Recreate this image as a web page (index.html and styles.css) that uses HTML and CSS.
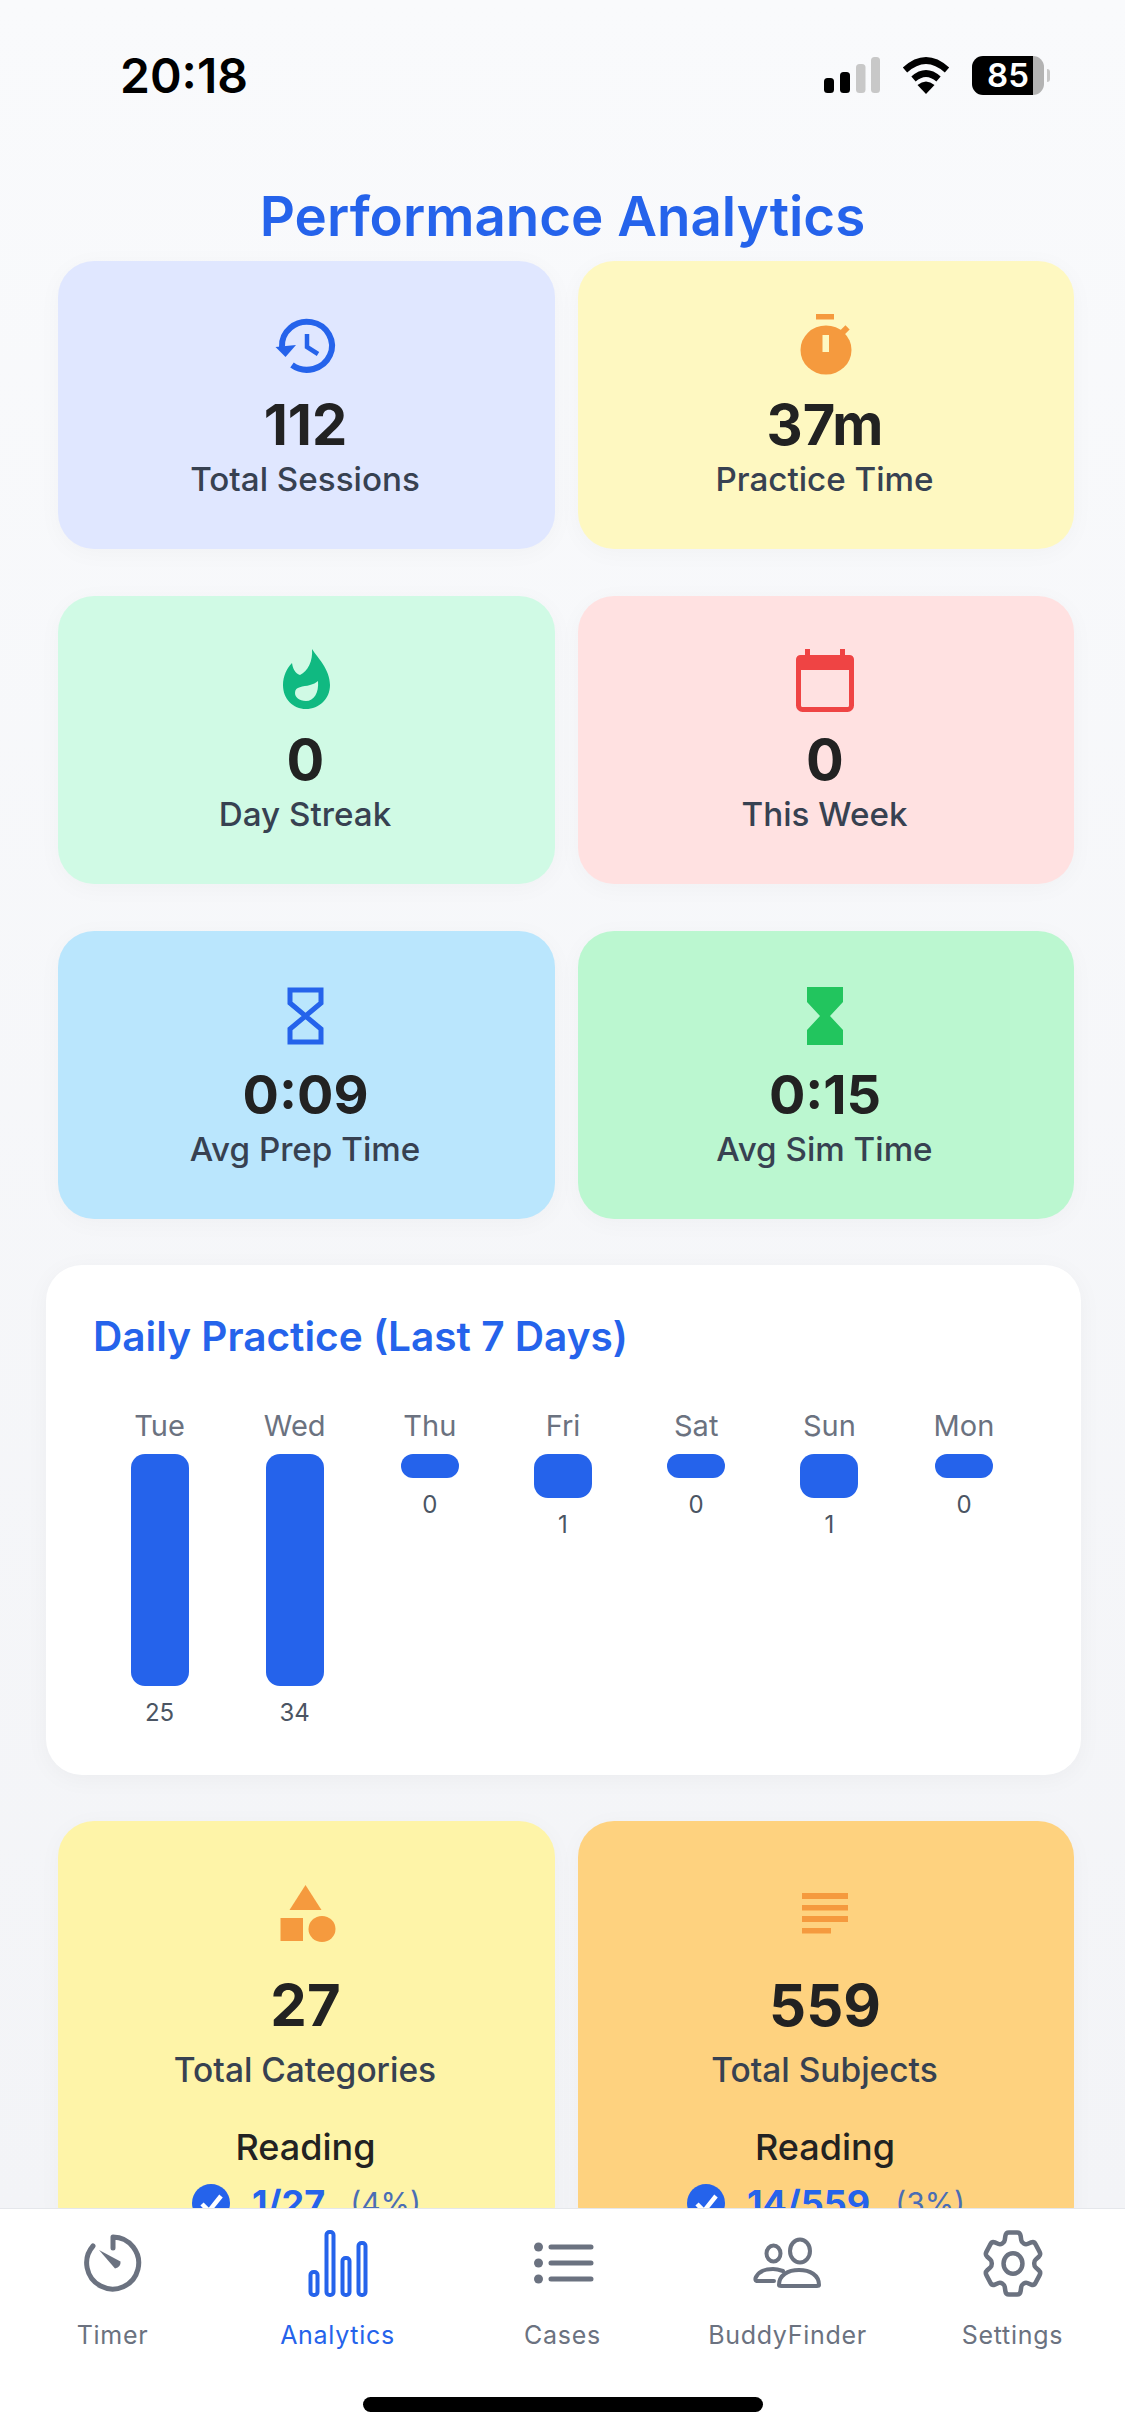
FILE: index.html
```html
<!DOCTYPE html>
<html lang="en">
<head>
    <meta charset="UTF-8">
    <meta name="viewport" content="width=device-width, initial-scale=1.0">
    <title>Performance Analytics</title>
    <link rel="stylesheet" href="styles.css">
</head>
<body>

<div class="app">
    <div class="content">
        <div class="status-bar">
            <span class="time">20:18</span>
            <div class="status-icons">
                <svg class="signal" width="56" height="36" viewBox="0 0 56 36">
                    <rect x="0" y="21" width="10" height="15" rx="3.5" fill="#000"/>
                    <rect x="16" y="15" width="10" height="21" rx="3.5" fill="#000"/>
                    <rect x="32" y="7" width="9.500" height="29" rx="3.5" fill="#c8c8c8"/>
                    <rect x="47" y="0" width="9" height="36" rx="3.5" fill="#c8c8c8"/>
                </svg>
                <svg class="wifi" width="48" height="37" viewBox="0 0 48 37">
                    <path d="M3 13Q24 -6 45 13" fill="none" stroke="#000" stroke-width="6.5"/>
                    <path d="M11.500 22Q24 11 36.500 22" fill="none" stroke="#000" stroke-width="6.5"/>
                    <path d="M15.500 28Q24 21 32.500 28L24 37Z" fill="#000"/>
                </svg>
                <span class="battery">85</span>
            </div>
        </div>

        <h1 class="page-title">Performance Analytics</h1>

        <div class="stat-grid">
            <div class="stat-card indigo">
                <div class="stat-icon">
                    <svg width="80" height="64" viewBox="0 0 80 64">
                        <path d="M15 33A25 24 0 1 1 25 51" fill="none" stroke="#2563eb" stroke-width="6"/>
                        <path d="M8.500 33L29 31L18.500 43Z" fill="#2563eb"/>
                        <path d="M40 20V33L51 40" fill="none" stroke="#2563eb" stroke-width="4.500"/>
                    </svg>
                </div>
                <div class="stat-value">112</div>
                <div class="stat-label">Total Sessions</div>
            </div>
            <div class="stat-card yellow">
                <div class="stat-icon">
                    <svg width="80" height="64" viewBox="0 0 80 64">
                        <rect x="30" y="0" width="18" height="5.500" fill="#f59a3e"/>
                        <rect x="55" y="12" width="6" height="11" transform="rotate(45 58 17)" fill="#f59a3e"/>
                        <ellipse cx="40" cy="36" rx="25.500" ry="24.500" fill="#f59a3e"/>
                        <rect x="36.500" y="21" width="6.500" height="17" fill="#fef8c1"/>
                    </svg>
                </div>
                <div class="stat-value">37m</div>
                <div class="stat-label">Practice Time</div>
            </div>
            <div class="stat-card mint">
                <div class="stat-icon">
                    <svg width="80" height="64" viewBox="0 0 80 64">
                        <path transform="translate(14 0)" fill-rule="evenodd" fill="#10b981" d="M31 0C36 8 49 20 49 36C49 50 38 60 25 60C12 60 2 50 2 36C2 27 6 19 11 14C12 20 14 24 19 26C27 22 32 12 31 0ZM37 32C38 44 33 52 25 52C18 52 14 48 14 44C14 37 22 38 29 36C32 35 35 34 37 32Z"/>
                    </svg>
                </div>
                <div class="stat-value">0</div>
                <div class="stat-label">Day Streak</div>
            </div>
            <div class="stat-card rose">
                <div class="stat-icon">
                    <svg width="80" height="64" viewBox="0 0 80 64">
                        <rect x="19" y="0" width="5" height="9" fill="#ef4444"/>
                        <rect x="54" y="0" width="5" height="9" fill="#ef4444"/>
                        <rect x="12.500" y="8.500" width="53" height="52" rx="4" fill="none" stroke="#ef4444" stroke-width="5"/>
                        <path d="M10 21V11Q10 6 15 6H63Q68 6 68 11V21Z" fill="#ef4444"/>
                    </svg>
                </div>
                <div class="stat-value">0</div>
                <div class="stat-label">This Week</div>
            </div>
            <div class="stat-card sky">
                <div class="stat-icon">
                    <svg width="80" height="64" viewBox="0 0 80 64">
                        <path d="M23 6H54V19L23 45V58H54V45L23 19Z" fill="none" stroke="#2563eb" stroke-width="5"/>
                    </svg>
                </div>
                <div class="stat-value narrow">0:09</div>
                <div class="stat-label">Avg Prep Time</div>
            </div>
            <div class="stat-card green">
                <div class="stat-icon">
                    <svg width="80" height="64" viewBox="0 0 80 64">
                        <path d="M21 3H57V18L44 32L57 46V61H21V46L34 32L21 18Z" fill="#22c55e"/>
                    </svg>
                </div>
                <div class="stat-value narrow">0:15</div>
                <div class="stat-label">Avg Sim Time</div>
            </div>
        </div>

        <div class="chart-card">
            <h2 class="chart-title">Daily Practice (Last 7 Days)</h2>
            <div class="chart">
                <div class="day"><span class="day-name">Tue</span><div class="bar tall"></div><span class="day-count">25</span></div>
                <div class="day"><span class="day-name">Wed</span><div class="bar tall"></div><span class="day-count">34</span></div>
                <div class="day"><span class="day-name">Thu</span><div class="bar none"></div><span class="day-count">0</span></div>
                <div class="day"><span class="day-name">Fri</span><div class="bar one"></div><span class="day-count">1</span></div>
                <div class="day"><span class="day-name">Sat</span><div class="bar none"></div><span class="day-count">0</span></div>
                <div class="day"><span class="day-name">Sun</span><div class="bar one"></div><span class="day-count">1</span></div>
                <div class="day"><span class="day-name">Mon</span><div class="bar none"></div><span class="day-count">0</span></div>
            </div>
        </div>

        <div class="stat-grid">
            <div class="stat-card tall-card lemon">
                <div class="stat-icon">
                    <svg width="80" height="64" viewBox="0 0 80 64">
                        <path d="M38.500 4L54.500 29H22.500Z" fill="#f59a3e"/>
                        <rect x="13.500" y="37" width="22.500" height="23" fill="#f59a3e"/>
                        <ellipse cx="55" cy="48" rx="13.500" ry="13" fill="#f59a3e"/>
                    </svg>
                </div>
                <div class="stat-value">27</div>
                <div class="stat-label">Total Categories</div>
                <div class="progress-title">Reading</div>
                <div class="progress-row">
                    <svg width="38" height="38" viewBox="0 0 38 38">
                        <circle cx="19" cy="19" r="19" fill="#2563eb"/>
                        <path d="M10 20L17 27L29 12" fill="none" stroke="#fff" stroke-width="4.500"/>
                    </svg>
                    <span class="progress-count">1/27</span>
                    <span class="progress-percent">(4%)</span>
                </div>
            </div>
            <div class="stat-card tall-card amber">
                <div class="stat-icon">
                    <svg width="80" height="64" viewBox="0 0 80 64">
                        <rect x="16" y="12" width="46" height="6" fill="#f59a3e"/>
                        <rect x="16" y="24" width="46" height="5.500" fill="#f59a3e"/>
                        <rect x="16" y="35" width="46" height="6" fill="#f59a3e"/>
                        <rect x="16" y="47" width="29" height="5.500" fill="#f59a3e"/>
                    </svg>
                </div>
                <div class="stat-value">559</div>
                <div class="stat-label">Total Subjects</div>
                <div class="progress-title">Reading</div>
                <div class="progress-row">
                    <svg width="38" height="38" viewBox="0 0 38 38">
                        <circle cx="19" cy="19" r="19" fill="#2563eb"/>
                        <path d="M10 20L17 27L29 12" fill="none" stroke="#fff" stroke-width="4.500"/>
                    </svg>
                    <span class="progress-count">14/559</span>
                    <span class="progress-percent">(3%)</span>
                </div>
            </div>
        </div>
    </div>

    <div class="tab-bar">
        <div class="tabs">
            <div class="tab">
                <svg width="80" height="72" viewBox="0 0 80 72">
                    <path d="M40 19V8A26 26 0 1 1 20 17" fill="none" stroke="#6b7280" stroke-width="5" stroke-linecap="round" stroke-linejoin="round"/>
                    <path d="M26 21L47.500 32.500Q48 38 42 39.500Z" fill="#6b7280"/>
                </svg>
                <span class="tab-label">Timer</span>
            </div>
            <div class="tab active">
                <svg width="80" height="72" viewBox="0 0 80 72" fill="none" stroke="#2563eb" stroke-width="4">
                    <rect x="12.500" y="43" width="7" height="23" rx="3"/>
                    <rect x="28.500" y="3" width="7" height="63" rx="3"/>
                    <rect x="44.500" y="29" width="7" height="37" rx="3"/>
                    <rect x="60.500" y="14" width="7" height="52" rx="3"/>
                </svg>
                <span class="tab-label">Analytics</span>
            </div>
            <div class="tab">
                <svg width="80" height="72" viewBox="0 0 80 72">
                    <circle cx="15.500" cy="18" r="4.500" fill="#6b7280"/>
                    <circle cx="15.500" cy="34" r="4.500" fill="#6b7280"/>
                    <circle cx="15.500" cy="50" r="4.500" fill="#6b7280"/>
                    <path d="M28 18H68M28 34H68M28 50H68" stroke="#6b7280" stroke-width="5" stroke-linecap="round"/>
                </svg>
                <span class="tab-label">Cases</span>
            </div>
            <div class="tab">
                <svg width="80" height="72" viewBox="0 0 80 72" fill="none" stroke="#6b7280" stroke-width="4">
                    <ellipse cx="25.500" cy="24.500" rx="7" ry="8"/>
                    <ellipse cx="52" cy="22" rx="10" ry="11.500"/>
                    <path d="M31 56C31 46 40 41 51 41C62 41 71 46 71 56Q71 57 69 57H33Q31 57 31 56Z"/>
                    <path d="M26 52H10C7 52 7 50 8 48C11 42 18 40 25 40C29 40 32 41 35 42" stroke-linecap="round"/>
                </svg>
                <span class="tab-label">BuddyFinder</span>
            </div>
            <div class="tab">
                <svg width="80" height="72" viewBox="0 0 80 72" fill="none" stroke="#6b7280" stroke-width="4.500">
                    <g transform="translate(40 34.500) scale(3.150 3.450) translate(-12 -12)">
                        <path vector-effect="non-scaling-stroke" d="M9.594 3.94c.09-.542.56-.94 1.11-.94h2.593c.55 0 1.02.398 1.11.94l.213 1.281c.063.374.313.686.645.87.074.04.147.083.22.127.325.196.72.257 1.075.124l1.217-.456a1.125 1.125 0 0 1 1.37.49l1.296 2.247a1.125 1.125 0 0 1-.26 1.431l-1.003.827c-.293.241-.438.613-.43.992a7.723 7.723 0 0 1 0 .255c-.008.378.137.75.43.991l1.004.827c.424.35.534.955.26 1.43l-1.298 2.247a1.125 1.125 0 0 1-1.369.491l-1.217-.456c-.355-.133-.75-.072-1.076.124a6.47 6.47 0 0 1-.22.128c-.331.183-.581.495-.644.869l-.213 1.281c-.09.543-.56.94-1.11.94h-2.594c-.55 0-1.019-.398-1.11-.94l-.213-1.281c-.062-.374-.312-.686-.644-.87a6.52 6.52 0 0 1-.22-.127c-.325-.196-.72-.257-1.076-.124l-1.217.456a1.125 1.125 0 0 1-1.369-.49l-1.297-2.247a1.125 1.125 0 0 1 .26-1.431l1.004-.827c.292-.24.437-.613.43-.991a6.932 6.932 0 0 1 0-.255c.007-.38-.138-.751-.43-.992l-1.004-.827a1.125 1.125 0 0 1-.26-1.43l1.297-2.247a1.125 1.125 0 0 1 1.37-.491l1.216.456c.356.133.751.072 1.076-.124.072-.044.146-.086.22-.128.332-.183.582-.495.644-.869l.214-1.28Z"/>
                        <circle vector-effect="non-scaling-stroke" cx="12" cy="12" r="3"/>
                    </g>
                </svg>
                <span class="tab-label">Settings</span>
            </div>
        </div>
        <div class="home-indicator"></div>
    </div>
</div>

</body>
</html>
```

FILE: styles.css
```css
body {
    margin: 0;
    font-family: Inter, "Liberation Sans", sans-serif;
    background: #f8f9fb;
    color: #222;
}
.app {
    display: flex;
    flex-direction: column;
    height: 2436px;
    overflow: hidden;
}
.content {
    flex: 1;
    min-height: 0;
    overflow: hidden;
    background: linear-gradient(to bottom, #f9fafc, #f3f4f7);
}
.status-bar {
    display: flex;
    justify-content: space-between;
    align-items: center;
    height: 150px;
    padding: 0 81px 0 120px;
}
.time {
    font-size: 48px;
    font-weight: 600;
    color: #000;
}
.status-icons {
    display: flex;
    align-items: center;
}
.wifi {
    margin-left: 22px;
}
.battery {
    position: relative;
    width: 72px;
    height: 39px;
    margin-left: 22px;
    border-radius: 11px;
    background: linear-gradient(to right, #000 85%, #b3b3b3 85%);
    color: #fff;
    font-size: 33px;
    font-weight: 600;
    line-height: 39px;
    text-align: center;
}
.battery::after {
    content: "";
    position: absolute;
    right: -6px;
    top: 13px;
    width: 3px;
    height: 13px;
    border-radius: 0 4px 4px 0;
    background: #c8c8c8;
}
.page-title {
    margin: 31px 0 10px;
    color: #2563eb;
    font-size: 54.7px;
    font-weight: 600;
    line-height: 70px;
    text-align: center;
}
.stat-grid {
    display: grid;
    grid-template-columns: 497px 496px;
    column-gap: 23px;
    row-gap: 47px;
    margin: 0 51px 0 58px;
}
.stat-card {
    box-sizing: border-box;
    height: 288px;
    padding-top: 53px;
    border-radius: 36px;
    text-align: center;
    box-shadow: 0 4px 24px rgba(0, 0, 0, 0.03);
}
.stat-icon {
    height: 64px;
}
.stat-icon svg {
    display: block;
    margin: 0 auto;
}
.stat-value {
    margin-top: 14px;
    padding-right: 2px;
    font-size: 56px;
    font-weight: 700;
    line-height: 66px;
}
.stat-value.narrow {
    font-size: 54px;
}
.stat-label {
    margin-top: -1px;
    padding-right: 3px;
    color: #374151;
    font-size: 33.2px;
    font-weight: 500;
    line-height: 44px;
}
.indigo { background: #e0e7ff; }
.yellow { background: #fef8c1; }
.mint { background: #d0fae5; }
.rose { background: #ffe1e1; }
.sky { background: #bae6fd; }
.green { background: #bbf7d0; }
.lemon { background: #fef4a8; }
.amber { background: #fed27f; }
.tall-card {
    height: 420px;
    padding-top: 60px;
}
.tall-card .stat-value {
    margin-top: 27px;
    font-size: 58px;
}
.tall-card .stat-label {
    margin-top: 10px;
    font-size: 33.5px;
}
.progress-title {
    margin-top: 33px;
    padding-right: 2px;
    font-size: 36px;
    font-weight: 500;
    line-height: 44px;
}
.progress-row {
    display: flex;
    justify-content: center;
    align-items: center;
    height: 38px;
    margin-top: 15px;
}
.progress-count {
    margin-left: 22px;
    color: #2563eb;
    font-size: 36px;
    font-weight: 700;
}
.progress-percent {
    margin-left: 25px;
    color: #4a6db5;
    font-size: 30px;
}
.chart-card {
    box-sizing: border-box;
    margin: 46px 44px 46px 46px;
    padding: 47px;
    border-radius: 36px;
    background: white;
    box-shadow: 0 4px 24px rgba(0, 0, 0, 0.04);
}
.chart-title {
    margin: 0 0 44px;
    color: #2563eb;
    font-size: 40.6px;
    font-weight: 600;
    line-height: 50px;
}
.chart {
    display: flex;
    justify-content: space-around;
    height: 322px;
    padding-right: 2px;
}
.day {
    display: flex;
    flex-direction: column;
    align-items: center;
}
.day-name {
    margin-bottom: 8px;
    color: #6b7280;
    font-size: 29px;
    line-height: 40px;
}
.bar {
    width: 58px;
    border-radius: 14px;
    background: #2563eb;
}
.bar.tall { height: 232px; }
.bar.one { height: 44px; }
.bar.none { height: 24px; border-radius: 12px; }
.day-count {
    margin-top: 12px;
    color: #4b5563;
    font-size: 24px;
    line-height: 30px;
}
.tab-bar {
    height: 228px;
    box-sizing: border-box;
    border-top: 1px solid #e5e7eb;
    background: white;
}
.tabs {
    display: grid;
    grid-template-columns: repeat(5, 225px);
    padding-top: 20px;
}
.tab {
    display: flex;
    flex-direction: column;
    align-items: center;
    color: #6b7280;
}
.tab.active {
    color: #2563eb;
}
.tab-label {
    margin-top: 19px;
    font-size: 25px;
    letter-spacing: 0.7px;
    line-height: 30px;
}
.home-indicator {
    width: 400px;
    height: 15px;
    margin: 47px auto 0;
    border-radius: 8px;
    background: #000;
}
```
